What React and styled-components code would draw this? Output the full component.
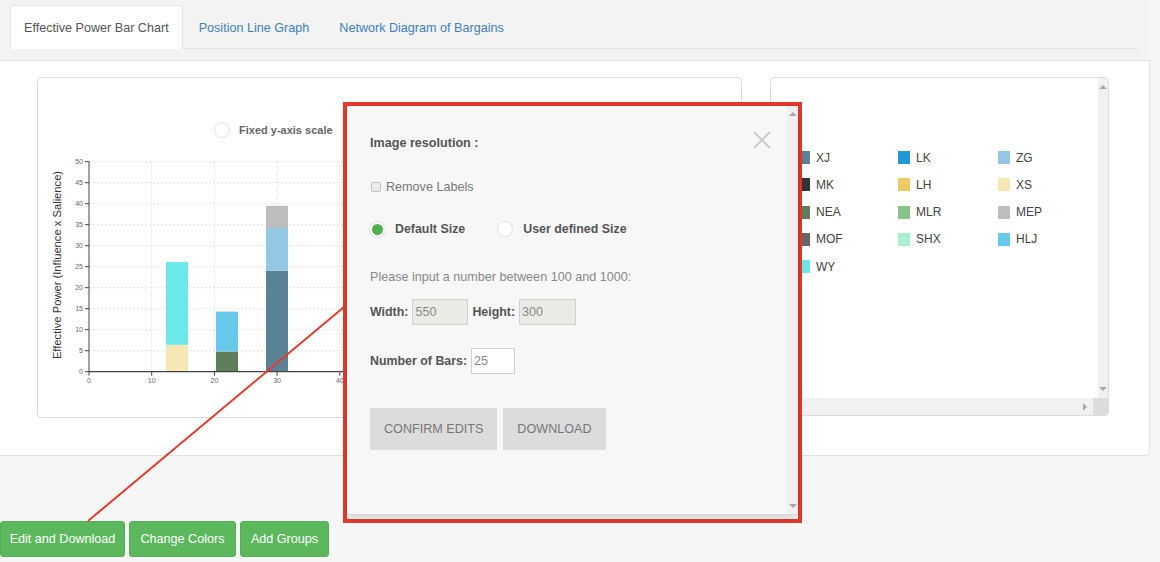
import React from 'react';
import styled, { createGlobalStyle, css } from 'styled-components';

const GlobalStyle = createGlobalStyle`
  html, body {
    margin: 0;
    padding: 0;
    background: #f6f6f6;
  }
  body {
    font-family: "Liberation Sans", Arial, sans-serif;
    font-size: 12.6px;
    color: #555;
  }
`;

const Page = styled.div`
  position: relative;
  width: 1160px;
  height: 562px;
  overflow: hidden;
`;

const TabBar = styled.div`
  width: 1151px;
  height: 61px;
  box-sizing: border-box;
  padding: 5px 13px 0 10px;
  background: #f3f3f3;
  border-bottom: 1px solid #dedede;
`;

const TabList = styled.ul`
  display: flex;
  margin: 0;
  padding: 0;
  list-style: none;
  height: 43px;
  border-bottom: 1px solid #e3e3e3;
`;

const Tab = styled.li`
  margin-right: 2px;
  padding: 0 13px;
  height: 43px;
  line-height: 44px;
  box-sizing: border-box;
  border: 1px solid transparent;
  color: #3f7fc1;
  white-space: nowrap;

  ${p =>
    p.$active &&
    css`
      background: #fff;
      color: #555;
      height: 44px;
      border-color: #e4e4e4;
      border-bottom-color: #fff;
      border-radius: 4px 4px 0 0;
    `}
`;

const Panel = styled.div`
  width: 1150px;
  height: 395px;
  box-sizing: border-box;
  padding: 16px 0 0 37px;
  background: #fff;
  border-right: 1px solid #e2e2e2;
  border-bottom: 1px solid #e2e2e2;
  border-radius: 0 0 4px 0;
  display: flex;
  align-items: flex-start;
  gap: 28px;
`;

const ChartCard = styled.div`
  width: 705px;
  height: 341px;
  box-sizing: border-box;
  padding-top: 43px;
  border: 1px solid #dcdcdc;
  border-radius: 4px;
`;

const RadioRow = styled.label`
  display: flex;
  align-items: center;
  gap: 9px;
  height: 17px;
  margin-left: 176px;
  font-size: 11px;
  font-weight: bold;
  color: #666;
`;

const Radio = styled.span`
  display: inline-block;
  flex: none;
  box-sizing: border-box;
  width: ${p => p.$size || 16}px;
  height: ${p => p.$size || 16}px;
  border-radius: 50%;
  background: #fff;
  border: 1px solid #e2e2e2;

  ${p =>
    p.$checked &&
    css`
      background: #4fae4f;
      border: 2px solid #fff;
      box-shadow: 0 0 0 1px #e2e2e2;
    `}
`;

const ChartSvg = styled.svg`
  display: block;
  margin-top: 7px;
`;

const LegendCard = styled.div`
  width: 339px;
  height: 339px;
  box-sizing: border-box;
  border: 1px solid #dcdcdc;
  border-radius: 4px;
  display: flex;
  flex-direction: column;
  overflow: hidden;
`;

const LegendBody = styled.div`
  flex: 1;
  display: flex;
`;

const LegendGrid = styled.div`
  flex: 1;
  display: grid;
  grid-template-columns: repeat(3, 100px);
  grid-auto-rows: 13px;
  row-gap: 14.3px;
  align-content: start;
  padding: 73px 0 0 27px;
`;

const LegendItem = styled.div`
  display: flex;
  align-items: center;
  gap: 6px;
  font-size: 12px;
  color: #444;
`;

const Swatch = styled.span`
  width: 12px;
  height: 13px;
  background: ${p => p.$color};
`;

const VScroll = styled.div`
  width: 15px;
  background: #f1f1f1;
  display: flex;
  flex-direction: column;
  justify-content: space-between;
  align-items: center;
  padding: 7px 0;
  box-sizing: border-box;
`;

const HScroll = styled.div`
  height: 17px;
  display: flex;
  background: #f1f1f1;
`;

const HTrack = styled.div`
  flex: 1;
  display: flex;
  justify-content: flex-end;
  align-items: center;
  padding-right: 6px;
`;

const Corner = styled.div`
  width: 15px;
  background: #dcdcdc;
`;

const Arrow = styled.span`
  width: 0;
  height: 0;
  border: 4px solid transparent;
  ${p => p.$dir === 'up' && css`border-bottom: 4px solid #a8a8a8; border-top-width: 0;`}
  ${p => p.$dir === 'down' && css`border-top: 4px solid #a8a8a8; border-bottom-width: 0;`}
  ${p => p.$dir === 'right' && css`border-left: 4px solid #a8a8a8; border-right-width: 0;`}
`;

const ButtonBar = styled.div`
  display: flex;
  gap: 4px;
  margin-top: 65px;
`;

const GreenButton = styled.button`
  width: ${p => p.$w}px;
  height: 36px;
  padding: 0;
  background: #5cb85c;
  border: 1px solid #55b155;
  border-radius: 3px;
  color: #fff;
  font-family: inherit;
  font-size: 12.6px;
  white-space: nowrap;
`;

const Connector = styled.svg`
  position: absolute;
  left: 0;
  top: 0;
  pointer-events: none;
`;

const Highlight = styled.div`
  position: absolute;
  left: 343px;
  top: 102px;
  width: 459px;
  height: 421px;
  box-sizing: border-box;
  border: 4px solid #e53a2c;
`;

const Modal = styled.div`
  height: 408px;
  display: flex;
  background: #f7f7f7;
  box-shadow: 0 3px 7px rgba(0, 0, 0, 0.16);
`;

const ModalBody = styled.div`
  position: relative;
  flex: 1;
  padding: 29px 0 0 23px;
`;

const ModalScroll = styled(VScroll)`
  width: 11px;
  background: #f0f0f0;
  padding: 6px 0 6px;
`;

const CloseX = styled.svg`
  position: absolute;
  top: 25px;
  right: 16px;
`;

const Title = styled.div`
  font-weight: bold;
  font-size: 12.6px;
  line-height: 16px;
  color: #555;
`;

const Row = styled.div`
  display: flex;
  align-items: center;
  margin-top: ${p => p.$gap}px;
  height: ${p => p.$h}px;
`;

const Check = styled.span`
  width: 10px;
  height: 10px;
  box-sizing: border-box;
  border: 1px solid #c4c4c4;
  border-radius: 2px;
  background: #ececec;
  margin: 0 5px 0 1px;
`;

const Muted = styled.span`
  color: ${p => p.$c || '#777'};
`;

const BoldLabel = styled.span`
  font-weight: bold;
  font-size: 12.4px;
  color: #555;
  margin: ${p => p.$m || '0'};
`;

const Field = styled.span`
  display: inline-flex;
  align-items: center;
  box-sizing: border-box;
  width: ${p => p.$w}px;
  height: 26px;
  padding-left: 2px;
  margin: 0 4px 0 4px;
  border: 1px solid #d0d0d0;
  background: ${p => (p.$disabled ? '#ebebe6' : '#fff')};
  color: #888;
`;

const GreyButton = styled.button`
  height: 42px;
  padding: 0 14px;
  margin-right: 6px;
  background: #dcdcdc;
  border: none;
  color: #777;
  font-family: inherit;
  font-size: 12.6px;
`;

const legend = [
  ['XJ', '#5b8294'], ['LK', '#1f9ad6'], ['ZG', '#94c7e4'],
  ['MK', '#333333'], ['LH', '#ecca63'], ['XS', '#f5e8b5'],
  ['NEA', '#5f7f5a'], ['MLR', '#88c48a'], ['MEP', '#bcbdbf'],
  ['MOF', '#666666'], ['SHX', '#a8f0d0'], ['HLJ', '#68c8ea'],
  ['WY', '#6be9ea'],
];

const bars = [
  { x: 166, parts: [[0, 6.4, '#f5e8b5'], [6.4, 26.1, '#6be9ea']] },
  { x: 216, parts: [[0, 4.8, '#5f7f5a'], [4.8, 14.3, '#68c8ea']] },
  { x: 266, parts: [[0, 24, '#5b8294'], [24, 34.2, '#94c7e4'], [34.2, 39.5, '#bcbdbf']] },
];

const yOf = v => 371.7 - v * 4.2;
const xOf = v => 89 + v * 6.27;

const Chart = () => {
  const yTicks = [0, 5, 10, 15, 20, 25, 30, 35, 40, 45, 50];
  const xTicks = [0, 10, 20, 30, 40, 50, 60, 70, 80, 90, 100];
  return (
    <ChartSvg width="703" height="257" viewBox="0 0 703 257">
      <g transform="translate(-38 -145)">
        {yTicks.slice(1).map(t => (
          <line key={'gy' + t} x1="89" x2="700" y1={yOf(t)} y2={yOf(t)} stroke="#e2e2e2" strokeDasharray="2 2" />
        ))}
        {xTicks.slice(1).map(t => (
          <line key={'gx' + t} x1={xOf(t)} x2={xOf(t)} y1={yOf(50)} y2={yOf(0)} stroke="#e2e2e2" strokeDasharray="2 2" />
        ))}
        {bars.map(b =>
          b.parts.map(([a, z, c]) => (
            <rect key={b.x + c} x={b.x} width="22" y={yOf(z)} height={yOf(a) - yOf(z)} fill={c} />
          ))
        )}
        <line x1="89" x2="89" y1={yOf(50)} y2={yOf(0)} stroke="#444" strokeWidth="1" />
        <line x1="89" x2="700" y1={yOf(0)} y2={yOf(0)} stroke="#444" strokeWidth="1.2" />
        {yTicks.map(t => (
          <g key={'ty' + t}>
            <line x1="85" x2="89" y1={yOf(t)} y2={yOf(t)} stroke="#444" />
            <text x="83" y={yOf(t) + 2.5} fontSize="7" fill="#666" textAnchor="end">{t}</text>
          </g>
        ))}
        {xTicks.map(t => (
          <g key={'tx' + t}>
            <line x1={xOf(t)} x2={xOf(t)} y1={yOf(0)} y2={yOf(0) + 4} stroke="#444" />
            <text x={xOf(t)} y="383" fontSize="7" fill="#666" textAnchor="middle">{t}</text>
          </g>
        ))}
        <text
          x="0"
          y="0"
          transform="translate(61 265) rotate(-90)"
          fontSize="11.2"
          fill="#333"
          textAnchor="middle"
          fontFamily="Liberation Sans, Arial, sans-serif"
        >
          Effective Power (Influence x Salience)
        </text>
      </g>
    </ChartSvg>
  );
};

export default function App() {
  return (
    <Page>
      <GlobalStyle />
      <TabBar>
        <TabList>
          <Tab $active>Effective Power Bar Chart</Tab>
          <Tab>Position Line Graph</Tab>
          <Tab>Network Diagram of Bargains</Tab>
        </TabList>
      </TabBar>

      <Panel>
        <ChartCard>
          <RadioRow>
            <Radio />
            Fixed y-axis scale
          </RadioRow>
          <Chart />
        </ChartCard>

        <LegendCard>
          <LegendBody>
            <LegendGrid>
              {legend.map(([name, color]) => (
                <LegendItem key={name}>
                  <Swatch $color={color} />
                  {name}
                </LegendItem>
              ))}
            </LegendGrid>
            <VScroll>
              <Arrow $dir="up" />
              <Arrow $dir="down" />
            </VScroll>
          </LegendBody>
          <HScroll>
            <HTrack>
              <Arrow $dir="right" />
            </HTrack>
            <Corner />
          </HScroll>
        </LegendCard>
      </Panel>

      <ButtonBar>
        <GreenButton $w={125}>Edit and Download</GreenButton>
        <GreenButton $w={107}>Change Colors</GreenButton>
        <GreenButton $w={89}>Add Groups</GreenButton>
      </ButtonBar>

      <Connector width="1160" height="562">
        <line x1="88" y1="521" x2="344" y2="307" stroke="#e53a2c" strokeWidth="2" />
      </Connector>

      <Highlight>
        <Modal>
          <ModalBody>
            <CloseX width="18" height="18" viewBox="0 0 18 18">
              <path d="M1 1 L17 17 M17 1 L1 17" stroke="#cdcdcd" strokeWidth="2" fill="none" />
            </CloseX>
            <Title>Image resolution :</Title>
            <Row $gap={28} $h={16}>
              <Check />
              <Muted>Remove Labels</Muted>
            </Row>
            <Row $gap={25} $h={18}>
              <Radio $checked $size={15} />
              <BoldLabel $m="0 0 0 10px">Default Size</BoldLabel>
              <Radio $size={16} style={{ marginLeft: 32 }} />
              <BoldLabel $m="0 0 0 10px">User defined Size</BoldLabel>
            </Row>
            <Row $gap={31} $h={16}>
              <Muted $c="#888">Please input a number between 100 and 1000:</Muted>
            </Row>
            <Row $gap={14} $h={26}>
              <BoldLabel>Width:</BoldLabel>
              <Field $w={56} $disabled>550</Field>
              <BoldLabel>Height:</BoldLabel>
              <Field $w={57} $disabled>300</Field>
            </Row>
            <Row $gap={23} $h={26}>
              <BoldLabel>Number of Bars:</BoldLabel>
              <Field $w={44}>25</Field>
            </Row>
            <Row $gap={34} $h={42}>
              <GreyButton>CONFIRM EDITS</GreyButton>
              <GreyButton>DOWNLOAD</GreyButton>
            </Row>
          </ModalBody>
          <ModalScroll>
            <Arrow $dir="up" />
            <Arrow $dir="down" />
          </ModalScroll>
        </Modal>
      </Highlight>
    </Page>
  );
}
